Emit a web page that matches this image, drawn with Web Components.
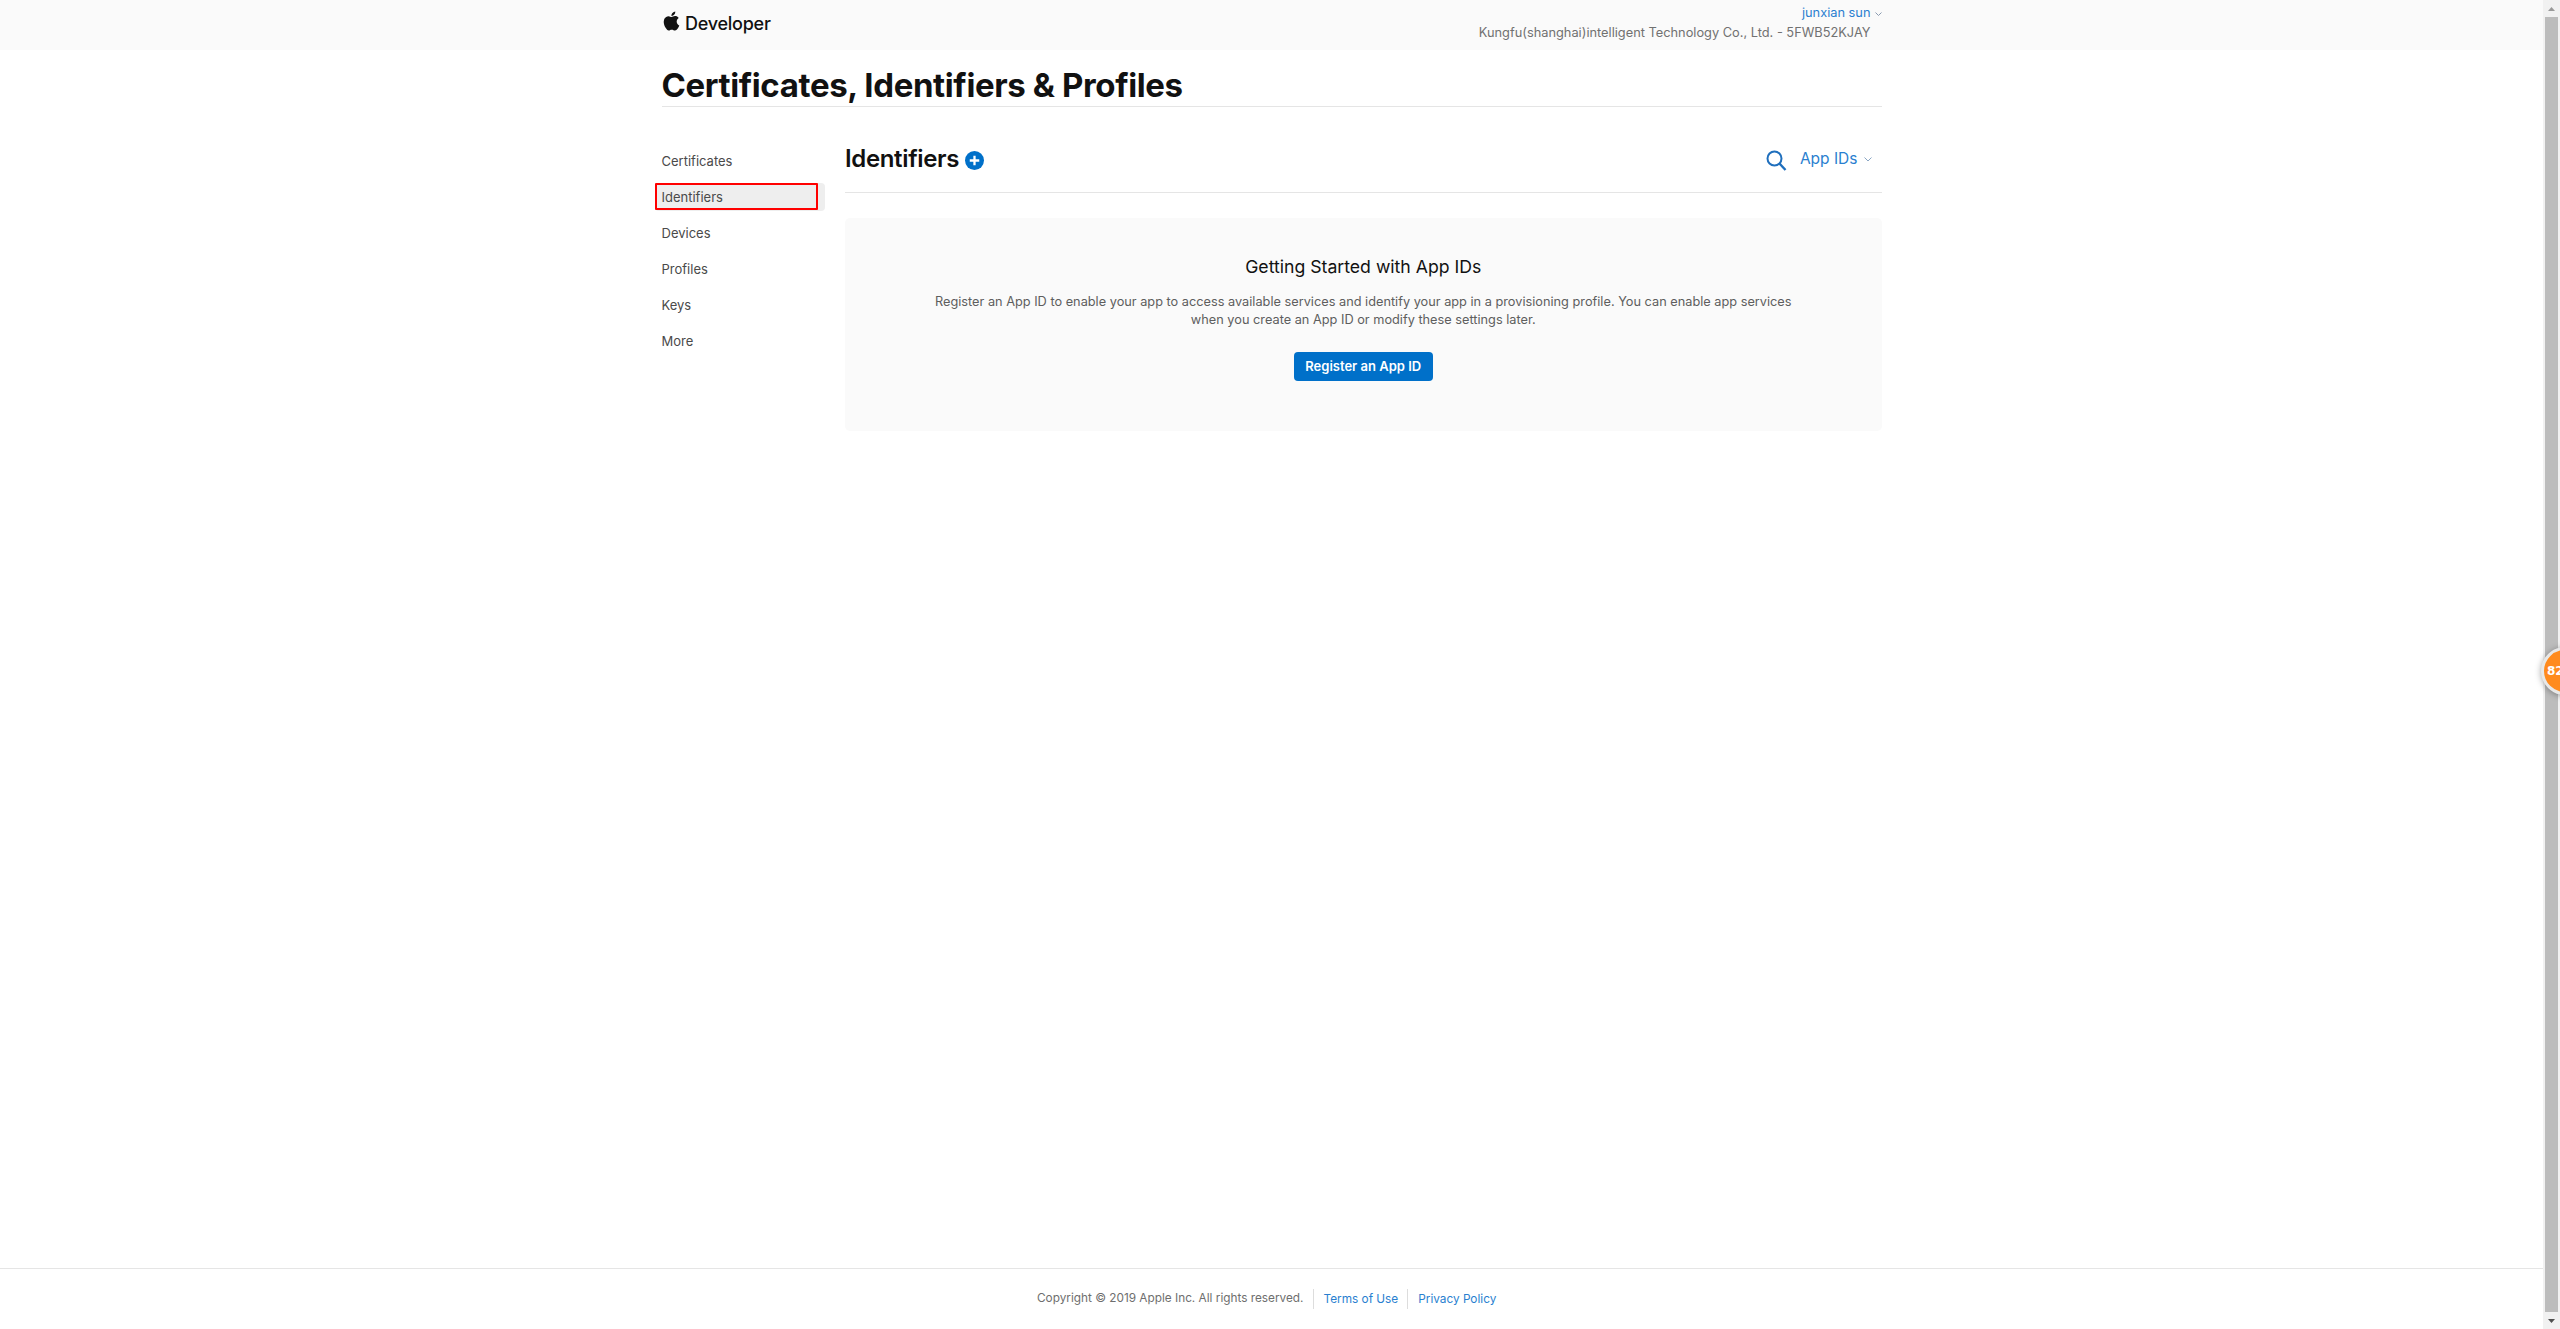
<!DOCTYPE html>
<html lang="en">
<head>
<meta charset="utf-8">
<title>Certificates, Identifiers & Profiles</title>
<style>
    html, body { margin: 0; height: 100%; background: #fff; overflow: hidden; }
    body { font-family: Inter, "Liberation Sans", sans-serif; color: #333; }
    #shell { display: flex; height: 1329px; position: relative; overflow: hidden; }
    #page { flex: 1; min-width: 0; display: flex; flex-direction: column; }
    #middle { flex: 1; width: 1220px; margin: 0 auto; }
    #columns { display: flex; }
</style>
</head>
<body>

<template id="dev-header-tpl">
    <style>
        :host { display: block; height: 50px; background: #fafafa; }
        .wrap { width: 1220px; margin: 0 auto; height: 100%; display: flex; justify-content: space-between; }
        .brand { display: flex; align-items: flex-start; gap: 4px; padding: 12px 0 0 .5px; color: #111; font-size: 18px; font-weight: 500; letter-spacing: -0.25px; line-height: 24px; }
        .brand svg { width: 19px; height: 20px; margin-top: -1px; fill: #111; }
        .acct { display: flex; flex-direction: column; align-items: flex-end; font-size: 12.8px; line-height: 20px; padding-top: 3px; }
        .user { color: #2a7fd0; display: flex; align-items: center; gap: 4px; }
        .user svg { width: 7px; height: 4px; margin-top: 2px; }
        .org { color: #717171; margin-right: 11px; }
    </style>
    <div class="wrap">
        <div class="brand">
            <svg viewBox="0 0 24 24"><path d="M12.152 6.896c-.948 0-2.415-1.078-3.96-1.04-2.04.027-3.91 1.183-4.961 3.014-2.117 3.675-.546 9.103 1.519 12.09 1.013 1.454 2.208 3.09 3.792 3.039 1.52-.065 2.09-.987 3.935-.987 1.831 0 2.35.987 3.96.948 1.637-.026 2.676-1.48 3.676-2.948 1.156-1.688 1.636-3.325 1.662-3.415-.039-.013-3.182-1.221-3.22-4.857-.026-3.04 2.48-4.494 2.597-4.559-1.429-2.09-3.623-2.324-4.39-2.376-2-.156-3.675 1.09-4.61 1.09zM15.53 3.83c.843-1.012 1.4-2.427 1.245-3.83-1.207.052-2.662.805-3.532 1.818-.78.896-1.454 2.338-1.273 3.714 1.338.104 2.715-.688 3.559-1.701"/></svg>
            <span>Developer</span>
        </div>
        <div class="acct">
            <span class="user"><slot name="user"></slot><svg viewBox="0 0 7 4"><path d="M.5.5 3.5 3.5 6.5.5" fill="none" stroke="#8a9bb0" stroke-width="1"/></svg></span>
            <span class="org"><slot name="org"></slot></span>
        </div>
    </div>
</template>

<template id="page-title-tpl">
    <style>
        :host { display: block; height: 56px; border-bottom: 1px solid #e5e5e5; box-sizing: content-box; }
        h1 { margin: 0; padding-top: 16px; font-size: 33px; line-height: 38px; font-weight: 700; color: #111; letter-spacing: -0.38px; }
    </style>
    <h1><slot></slot></h1>
</template>

<template id="side-nav-tpl">
    <style>
        :host { display: flex; flex-direction: column; width: 183.5px; flex: none; padding-top: 36px; }
    </style>
    <slot></slot>
</template>

<template id="nav-item-tpl">
    <style>
        :host { display: block; position: relative; height: 36px; font-size: 13px; line-height: 36px; color: #4a4a4a; }
        :host([active]) .bg { position: absolute; left: -6.5px; top: 4px; width: 170px; height: 28px; background: #eee; border-radius: 4px; }
        :host([active]) .mark { position: absolute; left: -6.5px; top: 4px; width: 163px; height: 27px; box-sizing: border-box; border: 2px solid #f00; border-radius: 1px; }
        span { position: relative; }
    </style>
    <div class="bg"></div>
    <span><slot></slot></span>
    <div class="mark"></div>
</template>

<template id="section-head-tpl">
    <style>
        :host { display: flex; align-items: center; justify-content: space-between; height: 67px; padding-top: 18px; border-bottom: 1px solid #e5e5e5; box-sizing: content-box; }
        .left { display: flex; align-items: center; gap: 6px; }
        h2 { margin: 0; font-size: 24px; font-weight: 600; line-height: 30px; color: #111; letter-spacing: -0.35px; }
        .plus { width: 19px; height: 19px; margin-top: 3px; }
        .right { display: flex; align-items: center; margin-right: 10px; font-size: 15.5px; color: #2a7fd0; }
        .lens { width: 21px; height: 21px; margin-right: 13px; margin-top: 4px; }
        .chev { width: 8px; height: 5px; margin-left: 6px; margin-top: 2px; }
    </style>
    <div class="left">
        <h2><slot name="title"></slot></h2>
        <svg class="plus" viewBox="0 0 20 20"><circle cx="10" cy="10" r="10" fill="#0070c9"/><path d="M10 5v10M5 10h10" stroke="#fff" stroke-width="2.4"/></svg>
    </div>
    <div class="right">
        <svg class="lens" viewBox="0 0 21 21"><circle cx="8.5" cy="8.5" r="7" fill="none" stroke="#1f6fbd" stroke-width="2"/><path d="M13.5 13.5 19.5 20" stroke="#1f6fbd" stroke-width="2.4" fill="none"/></svg>
        <slot name="filter"></slot>
        <svg class="chev" viewBox="0 0 8 5"><path d="M.5.5 4 4 7.5.5" fill="none" stroke="#8aa6c4" stroke-width="1"/></svg>
    </div>
</template>

<template id="empty-state-tpl">
    <style>
        :host { display: flex; flex-direction: column; align-items: center; margin-top: 25px; height: 213px; background: #fafafa; border-radius: 5px; box-sizing: border-box; padding-top: 37px; text-align: center; }
        h3 { margin: 0; font-size: 17.65px; line-height: 24px; font-weight: 400; color: #111; }
        p { margin: 14px 0 0; font-size: 12.75px; line-height: 18px; color: #5e5e5e; width: 900px; }
    </style>
    <h3><slot name="title"></slot></h3>
    <p><slot name="text"></slot></p>
    <slot name="action"></slot>
</template>

<template id="blue-button-tpl">
    <style>
        :host { display: inline-block; margin-top: 23px; width: 139px; height: 29px; line-height: 28px; background: #0070c9; border-radius: 4px; color: #fff; font-size: 13px; font-weight: 600; text-align: center; }
    </style>
    <slot></slot>
</template>

<template id="site-footer-tpl">
    <style>
        :host { display: flex; justify-content: flex-start; height: 60px; border-top: 1px solid #e5e5e5; box-sizing: content-box; padding-left: 1037px; font-size: 11.8px; }
        .row { display: flex; align-items: center; height: 20px; margin-top: 20px; }
        .copy { color: #6e6e6e; margin-top: -2px; }
        a { color: #2a7fd0; text-decoration: none; }
        .sep { width: 1px; height: 20px; background: #ddd; margin: 0 10px 0 9px; }
    </style>
    <div class="row">
        <span class="copy"><slot></slot></span>
        <span class="sep"></span>
        <a href="#">Terms of Use</a>
        <span class="sep"></span>
        <a href="#">Privacy Policy</a>
    </div>
</template>

<template id="page-scrollbar-tpl">
    <style>
        :host { display: flex; flex-direction: column; align-items: center; width: 17px; flex: none; background: #f1f1f1; }
        .arrow { height: 17px; display: flex; align-items: center; justify-content: center; flex: none; }
        .thumb { flex: 1; width: 13px; background: #bcbcbc; }
        svg { width: 7px; height: 4px; }
    </style>
    <div class="arrow"><svg viewBox="0 0 7 4"><path d="M3.5 0 7 4H0z" fill="#999"/></svg></div>
    <div class="thumb"></div>
    <div class="arrow"><svg viewBox="0 0 7 4"><path d="M0 0h7L3.5 4z" fill="#505050"/></svg></div>
</template>

<template id="float-badge-tpl">
    <style>
        :host { position: absolute; left: 2541px; top: 647px; width: 48px; height: 48px; box-sizing: border-box; border: 3px solid #e8e8e8; border-radius: 50%; background: #ff8b1e; box-shadow: 0 1px 6px rgba(0,0,0,.35); color: #fff; font: 700 12px/42px "DejaVu Sans", sans-serif; padding-left: 3px; }
    </style>
    <slot></slot>
</template>

<div id="shell">
    <div id="page">
        <dev-header>
            <span slot="user">junxian sun</span>
            <span slot="org">Kungfu(shanghai)intelligent Technology Co., Ltd. - 5FWB52KJAY</span>
        </dev-header>
        <div id="middle">
            <page-title>Certificates, Identifiers &amp; Profiles</page-title>
            <div id="columns">
                <side-nav>
                    <nav-item>Certificates</nav-item>
                    <nav-item active>Identifiers</nav-item>
                    <nav-item>Devices</nav-item>
                    <nav-item>Profiles</nav-item>
                    <nav-item>Keys</nav-item>
                    <nav-item>More</nav-item>
                </side-nav>
                <div style="flex:1;min-width:0">
                    <section-head>
                        <span slot="title">Identifiers</span>
                        <span slot="filter">App IDs</span>
                    </section-head>
                    <empty-state>
                        <span slot="title">Getting Started with App IDs</span>
                        <span slot="text">Register an App ID to enable your app to access available services and identify your app in a provisioning profile. You can enable app services<br>when you create an App ID or modify these settings later.</span>
                        <blue-button slot="action">Register an App ID</blue-button>
                    </empty-state>
                </div>
            </div>
        </div>
        <site-footer>Copyright © 2019 Apple Inc. All rights reserved.</site-footer>
    </div>
    <page-scrollbar></page-scrollbar>
    <float-badge>82</float-badge>
</div>

<script>
    // every element just clones its template into an open shadow root
    function register(name) {
        class Item extends HTMLElement {
            constructor() {
                super();
                this.attachShadow({ mode: "open" });
                this.shadowRoot.appendChild(document.getElementById(name + "-tpl").content.cloneNode(true));
            }
        }
        customElements.define(name, Item);
    }
    ["dev-header", "page-title", "side-nav", "nav-item", "section-head", "empty-state",
     "blue-button", "site-footer", "page-scrollbar", "float-badge"].forEach(register);
</script>
</body>
</html>
